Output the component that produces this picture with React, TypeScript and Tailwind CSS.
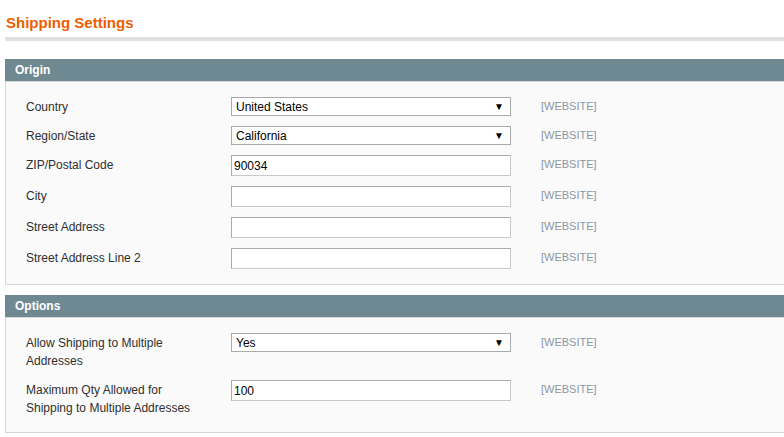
import React from "react";

type Row = {
  label: string;
  kind: "select" | "input";
  value: string;
  tall?: boolean;
};

const origin: Row[] = [
  { label: "Country", kind: "select", value: "United States" },
  { label: "Region/State", kind: "select", value: "California" },
  { label: "ZIP/Postal Code", kind: "input", value: "90034" },
  { label: "City", kind: "input", value: "" },
  { label: "Street Address", kind: "input", value: "" },
  { label: "Street Address Line 2", kind: "input", value: "" },
];

const options: Row[] = [
  { label: "Allow Shipping to Multiple Addresses", kind: "select", value: "Yes", tall: true },
  { label: "Maximum Qty Allowed for Shipping to Multiple Addresses", kind: "input", value: "100", tall: true },
];

function Field({ row }: { row: Row }) {
  if (row.kind === "select") {
    return (
      <div className="flex h-[19px] w-[280px] items-center justify-between border border-[#aaaaaa] bg-white pl-[4px] pr-[6px] text-[12px] text-black">
        <span>{row.value}</span>
        <span className="text-[10px] leading-none">▼</span>
      </div>
    );
  }
  return (
    <div className="flex h-[21px] w-[280px] items-center border border-[#aaaaaa] border-r-[#c8c8c8] border-b-[#c8c8c8] bg-white pl-[2px] text-[12px] text-black">
      {row.value}
    </div>
  );
}

function Section({ title, rows }: { title: string; rows: Row[] }) {
  return (
    <div className="ml-[5px] w-[800px]">
      <div className="h-[22px] bg-[#6f8992] pl-[10px] text-[12px] font-bold leading-[22px] text-white">
        {title}
      </div>
      <div className="flex flex-col gap-[10px] border border-[#d6d6d6] bg-[#fafafa] pb-[15px] pt-[15px]">
        {rows.map((row) => (
          <div key={row.label} className={"flex items-start" + (row.tall ? " min-h-[37px]" : "")}>
            <div className="w-[225px] shrink-0 pl-[20px] pr-[20px] pt-[1px] text-[12px] leading-[18px] text-[#2f2f2f]">
              {row.label}
            </div>
            <Field row={row} />
            <div className="pl-[30px] pt-[1px] text-[11px] leading-[16px] text-[#8a97a3]">[WEBSITE]</div>
          </div>
        ))}
      </div>
    </div>
  );
}

export default function App() {
  return (
    <div className="h-[437px] w-[784px] overflow-hidden bg-white font-['Liberation_Sans',Arial,sans-serif]">
      <div className="pl-[6px] pt-[14px] text-[15px] font-bold leading-[18px] text-[#eb5e00]">
        Shipping Settings
      </div>
      <div className="ml-[5px] mt-[5px] h-[4px] bg-[#dfdfdf]" />
      <div className="mt-[18px]">
        <Section title="Origin" rows={origin} />
      </div>
      <div className="mt-[10px]">
        <Section title="Options" rows={options} />
      </div>
    </div>
  );
}
